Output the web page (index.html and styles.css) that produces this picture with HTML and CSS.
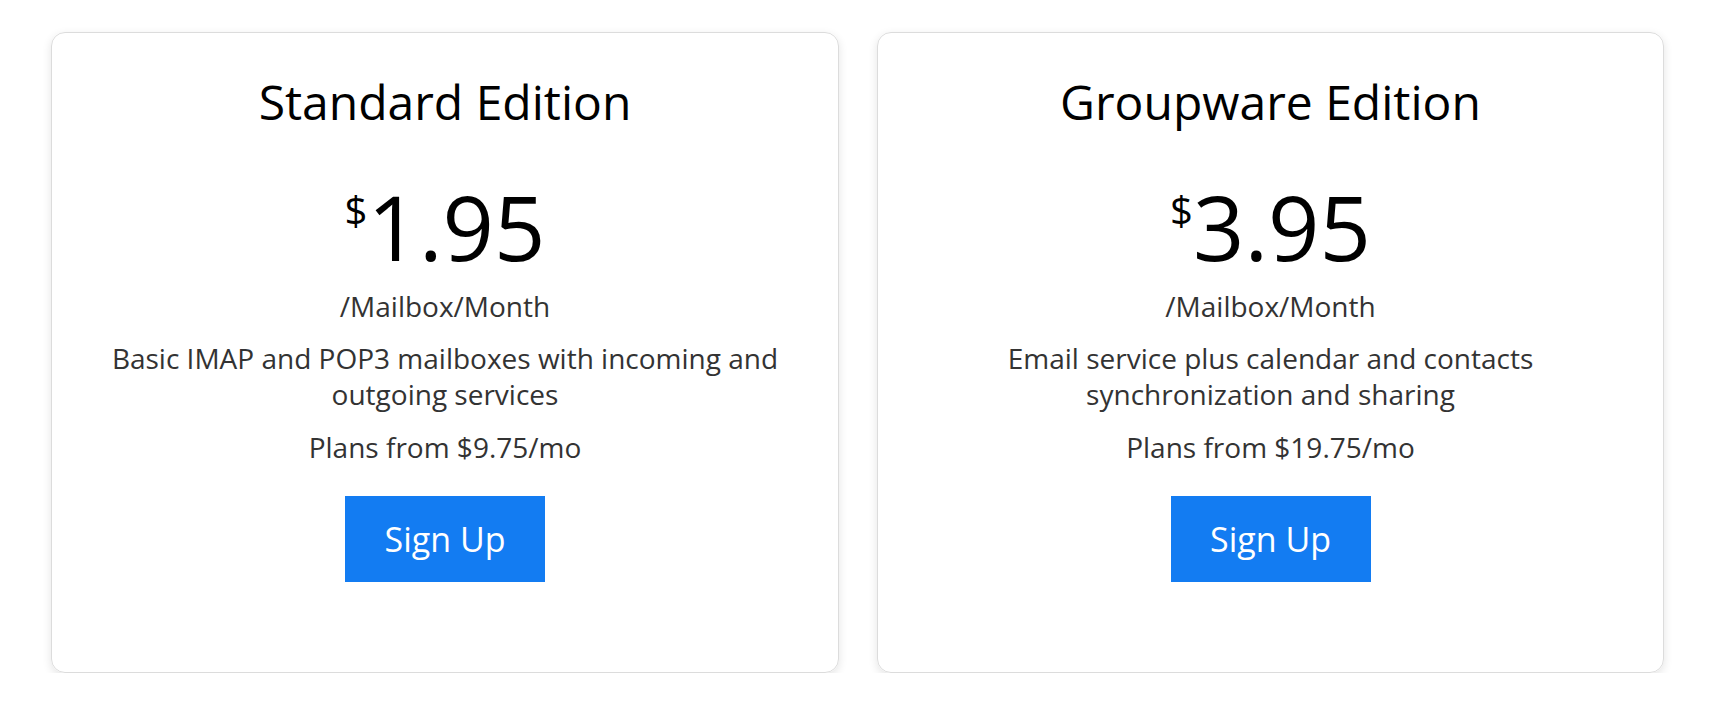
FILE: index.html
```html
<!DOCTYPE html>
<html lang="en">
<head>
<meta charset="utf-8">
<title>Editions</title>
<link rel="stylesheet" href="styles.css">
</head>
<body>
<main class="plans">
  <section class="card">
    <h2 class="title">Standard Edition</h2>
    <div class="price"><span class="currency">$</span><span class="amount">1.95</span></div>
    <p class="unit">/Mailbox/Month</p>
    <p class="desc">Basic IMAP and POP3 mailboxes with incoming and outgoing services</p>
    <p class="from">Plans from $9.75/mo</p>
    <a class="btn" href="#">Sign Up</a>
  </section>
  <section class="card">
    <h2 class="title">Groupware Edition</h2>
    <div class="price"><span class="currency">$</span><span class="amount">3.95</span></div>
    <p class="unit">/Mailbox/Month</p>
    <p class="desc">Email service plus calendar and contacts synchronization and sharing</p>
    <p class="from">Plans from $19.75/mo</p>
    <a class="btn" href="#">Sign Up</a>
  </section>
</main>
</body>
</html>
```
FILE: styles.css
```css
html, body {
  margin: 0;
  padding: 0;
  background: #fff;
}
body {
  font-family: "Open Sans", "Noto Sans", sans-serif;
  color: #000;
}
.plans {
  display: grid;
  grid-template-columns: 788px 787px;
  column-gap: 38px;
  padding: 32px 0 0 51px;
}
.card {
  box-sizing: border-box;
  height: 641px;
  border: 1px solid #dcdcdc;
  border-radius: 14px;
  box-shadow: 0 3px 10px rgba(0, 0, 0, 0.11);
  padding: 36px 50px 0;
  display: flex;
  flex-direction: column;
  align-items: center;
  text-align: center;
}
.title {
  margin: 0;
  font-size: 48px;
  font-weight: 400;
  line-height: 65px;
  color: #000;
}
.price {
  margin-top: 47px;
  display: flex;
  align-items: flex-start;
  justify-content: center;
  color: #000;
}
.currency {
  font-size: 40px;
  line-height: 40px;
  margin-top: 9px;
}
.amount {
  font-size: 90px;
  line-height: 90px;
}
.unit {
  margin: 18px 0 0;
  font-size: 28px;
  line-height: 35px;
  color: #333;
}
.desc {
  margin: 16px 0 0;
  font-size: 28px;
  line-height: 36px;
  color: #333;
}
.from {
  margin: 17px 0 0;
  font-size: 28px;
  line-height: 36px;
  color: #333;
}
.btn {
  margin-top: 31px;
  width: 200px;
  height: 86px;
  display: flex;
  align-items: center;
  justify-content: center;
  background: #137cf2;
  color: #fff;
  font-size: 34px;
  text-decoration: none;
}
```
